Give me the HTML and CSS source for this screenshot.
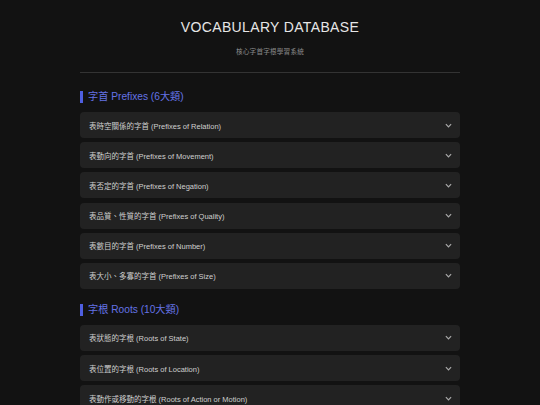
FILE: index.html
```html
<!DOCTYPE html>
<html lang="zh-Hant">
<head>
<meta charset="utf-8">
<title>Vocabulary Database</title>
<link rel="stylesheet" href="styles.css">
</head>
<body>
<div class="container">
  <header class="header">
    <h1 class="title">VOCABULARY DATABASE</h1>
    <p class="subtitle">核心字首字根學習系統</p>
  </header>

  <section class="section">
    <h2 class="section-title">字首 Prefixes (6大類)</h2>
    <div class="item"><span class="item-label">表時空關係的字首 (Prefixes of Relation)</span><svg class="chev" viewBox="0 0 8 5"><path d="M1 1l3 3 3-3"/></svg></div>
    <div class="item"><span class="item-label">表動向的字首 (Prefixes of Movement)</span><svg class="chev" viewBox="0 0 8 5"><path d="M1 1l3 3 3-3"/></svg></div>
    <div class="item"><span class="item-label">表否定的字首 (Prefixes of Negation)</span><svg class="chev" viewBox="0 0 8 5"><path d="M1 1l3 3 3-3"/></svg></div>
    <div class="item"><span class="item-label">表品質、性質的字首 (Prefixes of Quality)</span><svg class="chev" viewBox="0 0 8 5"><path d="M1 1l3 3 3-3"/></svg></div>
    <div class="item"><span class="item-label">表數目的字首 (Prefixes of Number)</span><svg class="chev" viewBox="0 0 8 5"><path d="M1 1l3 3 3-3"/></svg></div>
    <div class="item"><span class="item-label">表大小、多寡的字首 (Prefixes of Size)</span><svg class="chev" viewBox="0 0 8 5"><path d="M1 1l3 3 3-3"/></svg></div>
  </section>

  <section class="section">
    <h2 class="section-title">字根 Roots (10大類)</h2>
    <div class="item"><span class="item-label">表狀態的字根 (Roots of State)</span><svg class="chev" viewBox="0 0 8 5"><path d="M1 1l3 3 3-3"/></svg></div>
    <div class="item"><span class="item-label">表位置的字根 (Roots of Location)</span><svg class="chev" viewBox="0 0 8 5"><path d="M1 1l3 3 3-3"/></svg></div>
    <div class="item"><span class="item-label">表動作或移動的字根 (Roots of Action or Motion)</span><svg class="chev" viewBox="0 0 8 5"><path d="M1 1l3 3 3-3"/></svg></div>
  </section>
</div>
</body>
</html>
```

FILE: styles.css
```css
html, body {
  margin: 0;
  padding: 0;
  background: #121212;
}
body {
  font-family: "Liberation Sans", Arial, "Noto Sans CJK TC", sans-serif;
  color: #d0d0d0;
  overflow: hidden;
}
.container {
  width: 380px;
  margin: 0 auto;
}
.header {
  padding-top: 19px;
  padding-bottom: 15.5px;
  border-bottom: 1px solid #333;
  text-align: center;
}
.title {
  margin: 0;
  font-size: 14px;
  line-height: 16px;
  font-weight: normal;
  letter-spacing: 0.35px;
  color: #e6e6e6;
}
.subtitle {
  margin: 11.5px 0 0;
  font-size: 6.6px;
  line-height: 10px;
  letter-spacing: 0.2px;
  color: #8a8a8a;
}
.section {
  margin-top: 18px;
}
.section + .section {
  margin-top: 15px;
}
.section-title {
  margin: 0 0 9px;
  padding-left: 5px;
  border-left: 3px solid #4f5fe0;
  font-size: 10.2px;
  line-height: 12px;
  font-weight: normal;
  color: #6472e6;
}
.item {
  display: flex;
  align-items: center;
  justify-content: space-between;
  height: 26px;
  margin-bottom: 4.2px;
  padding: 0 8px 0 9px;
  box-sizing: border-box;
  background: #222222;
  border-radius: 4px;
}
.item-label {
  font-size: 7.5px;
  color: #cfcfcf;
}
.chev {
  width: 7px;
  height: 5px;
  fill: none;
  stroke: #a8a8a8;
  stroke-width: 1.4;
}
```
